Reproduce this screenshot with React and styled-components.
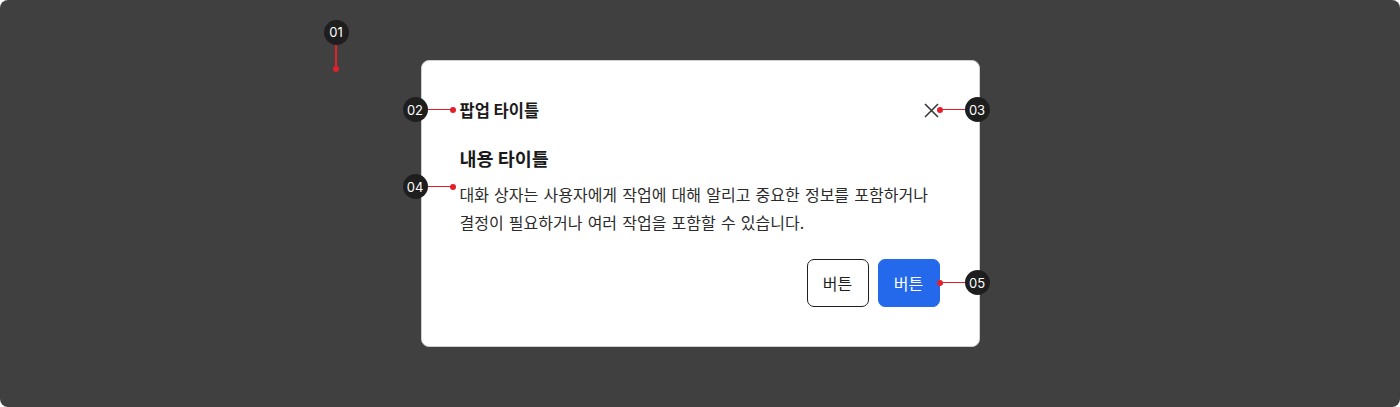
import styled, { createGlobalStyle } from "styled-components";

const GlobalStyle = createGlobalStyle`
  html, body {
    margin: 0;
    padding: 0;
    background: #ffffff;
  }
  body {
    font-family: Inter, "Noto Sans CJK KR", sans-serif;
  }
`;

const Frame = styled.div`
  width: 1400px;
  height: 407px;
  border-radius: 8px;
  background-color: #404040;
  display: flex;
  align-items: center;
  justify-content: center;
`;

const Dialog = styled.div`
  position: relative;
  width: 559px;
  box-sizing: border-box;
  padding: 37px 39px 39px 38px;
  background: #ffffff;
  border: 1px solid #cfcfcf;
  border-radius: 8px;
  display: flex;
  flex-direction: column;
  font-family: "Noto Sans CJK KR", sans-serif;
`;

const Header = styled.div`
  height: 24px;
  display: flex;
  align-items: center;
  justify-content: space-between;
`;

const Title = styled.h2`
  margin: 0;
  font-size: 16.5px;
  font-weight: 700;
  color: #1a1a1a;
  line-height: 24px;
`;

const CloseButton = styled.button`
  width: 24px;
  height: 24px;
  padding: 0;
  margin-right: -4px;
  border: none;
  background: none;
  display: flex;
  align-items: center;
  justify-content: center;
  cursor: pointer;
`;

const Body = styled.div`
  margin-top: 24px;
  display: flex;
  flex-direction: column;
`;

const ContentTitle = styled.h3`
  margin: 0;
  font-size: 18.5px;
  font-weight: 700;
  line-height: 24px;
  color: #1a1a1a;
`;

const Text = styled.p`
  margin: 10px 0 0;
  font-size: 16px;
  line-height: 28px;
  word-spacing: 1.6px;
  color: #2b2b2b;
`;

const Actions = styled.div`
  margin-top: 23px;
  display: flex;
  justify-content: flex-end;
  gap: 9px;
`;

const Button = styled.button`
  height: 48px;
  width: 62px;
  padding: 0;
  border-radius: 7px;
  font-family: "Noto Sans CJK KR", sans-serif;
  font-size: 16px;
  cursor: pointer;
  border: 1px solid ${(p) => (p.$primary ? "#2469ec" : "#1f1f1f")};
  background: ${(p) => (p.$primary ? "#2469ec" : "#ffffff")};
  color: ${(p) => (p.$primary ? "#ffffff" : "#1f1f1f")};
`;

/* annotation markers sit over the dialog */
const Badge = styled.span`
  position: absolute;
  left: ${(p) => p.$x - 12.5}px;
  top: ${(p) => p.$y - 12.5}px;
  width: 25px;
  height: 25px;
  border-radius: 50%;
  background: #1e1e1e;
  color: #ffffff;
  font-family: Inter, sans-serif;
  font-size: 13px;
  display: flex;
  align-items: center;
  justify-content: center;
  z-index: 2;
`;

const Leader = styled.span`
  position: absolute;
  left: ${(p) => p.$x}px;
  top: ${(p) => p.$y}px;
  width: ${(p) => p.$w}px;
  height: ${(p) => p.$h}px;
  background: #e3202a;
  z-index: 1;
`;

const Dot = styled.span`
  position: absolute;
  left: ${(p) => p.$x - 3}px;
  top: ${(p) => p.$y - 3}px;
  width: 6px;
  height: 6px;
  border-radius: 50%;
  background: #e3202a;
  z-index: 1;
`;

// page coordinates, shifted to the dialog's padding box (origin 422,62)
const ox = 422;
const oy = 62;

const markers = [
  { n: "01", badge: [336.5, 33], dot: [336.5, 70], line: [335.5, 45, 2, 25] },
  { n: "02", badge: [415.5, 110.5], dot: [453, 110.5], line: [427, 110, 26, 1] },
  { n: "03", badge: [977.5, 110.5], dot: [940, 110.5], line: [940, 110, 26, 1] },
  { n: "04", badge: [415.5, 187.5], dot: [453, 187.5], line: [427, 187, 26, 1] },
  { n: "05", badge: [977.5, 283.5], dot: [940, 283.5], line: [940, 283, 26, 1] },
];

const CloseIcon = () => (
  <svg width="15" height="15" viewBox="0 0 15 15" fill="none">
    <path d="M1 1L14 14M14 1L1 14" stroke="#333" strokeWidth="1.5" />
  </svg>
);

export default function App() {
  return (
    <>
      <GlobalStyle />
      <Frame>
        <Dialog>
          <Header>
            <Title>팝업 타이틀</Title>
            <CloseButton aria-label="닫기">
              <CloseIcon />
            </CloseButton>
          </Header>
          <Body>
            <ContentTitle>내용 타이틀</ContentTitle>
            <Text>
              대화 상자는 사용자에게 작업에 대해 알리고 중요한 정보를 포함하거나
              <br />
              결정이 필요하거나 여러 작업을 포함할 수 있습니다.
            </Text>
          </Body>
          <Actions>
            <Button>버튼</Button>
            <Button $primary>버튼</Button>
          </Actions>

          {markers.map((m) => (
            <span key={m.n}>
              <Leader
                $x={m.line[0] - ox}
                $y={m.line[1] - oy}
                $w={m.line[2]}
                $h={m.line[3]}
              />
              <Dot $x={m.dot[0] - ox} $y={m.dot[1] - oy} />
              <Badge $x={m.badge[0] - ox} $y={m.badge[1] - oy}>
                {m.n}
              </Badge>
            </span>
          ))}
        </Dialog>
      </Frame>
    </>
  );
}
